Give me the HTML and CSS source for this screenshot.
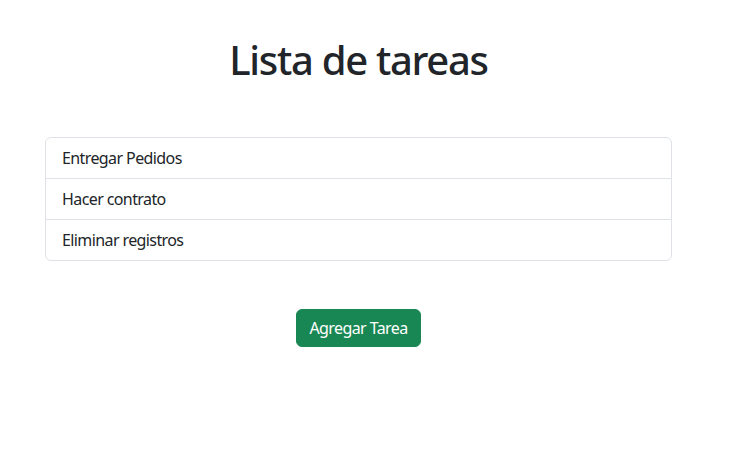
FILE: index.html
```html
<!DOCTYPE html>
<html lang="es">
<head>
<meta charset="utf-8">
<title>Lista de tareas</title>
<link rel="stylesheet" href="styles.css">
</head>
<body>
<main class="page">
  <h1 class="title">Lista de tareas</h1>
  <ul class="list-group">
    <li class="list-item">Entregar Pedidos</li>
    <li class="list-item">Hacer contrato</li>
    <li class="list-item">Eliminar registros</li>
  </ul>
  <div class="actions">
    <button class="btn-success" type="button">Agregar Tarea</button>
  </div>
</main>
</body>
</html>
```
FILE: styles.css
```css
* { box-sizing: border-box; }
html, body { margin: 0; padding: 0; background: #fff; }
body {
  font-family: "Noto Sans", "Open Sans", sans-serif;
  font-size: 16px;
  line-height: 24px;
  color: #212529;
  letter-spacing: -0.6px;
}
.page {
  width: 716px;
  padding: 36px 44px 0 45px;
}
.title {
  margin: 0;
  text-align: center;
  font-size: 40px;
  line-height: 48px;
  font-weight: 500;
  letter-spacing: -1.3px;
  color: #212529;
}
.list-group {
  list-style: none;
  margin: 53px 0 0;
  padding: 0;
  border: 1px solid #dee2e6;
  border-radius: 6px;
}
.list-item {
  padding: 8px 16px;
  border-top: 1px solid #dee2e6;
}
.list-item:first-child { border-top: 0; }
.actions {
  display: flex;
  justify-content: center;
  margin-top: 48px;
}
.btn-success {
  font: inherit;
  letter-spacing: -0.6px;
  color: #fff;
  background: #198754;
  border: 1px solid #198754;
  border-radius: 6px;
  padding: 6px 12px;
  line-height: 24px;
  cursor: pointer;
}
```
